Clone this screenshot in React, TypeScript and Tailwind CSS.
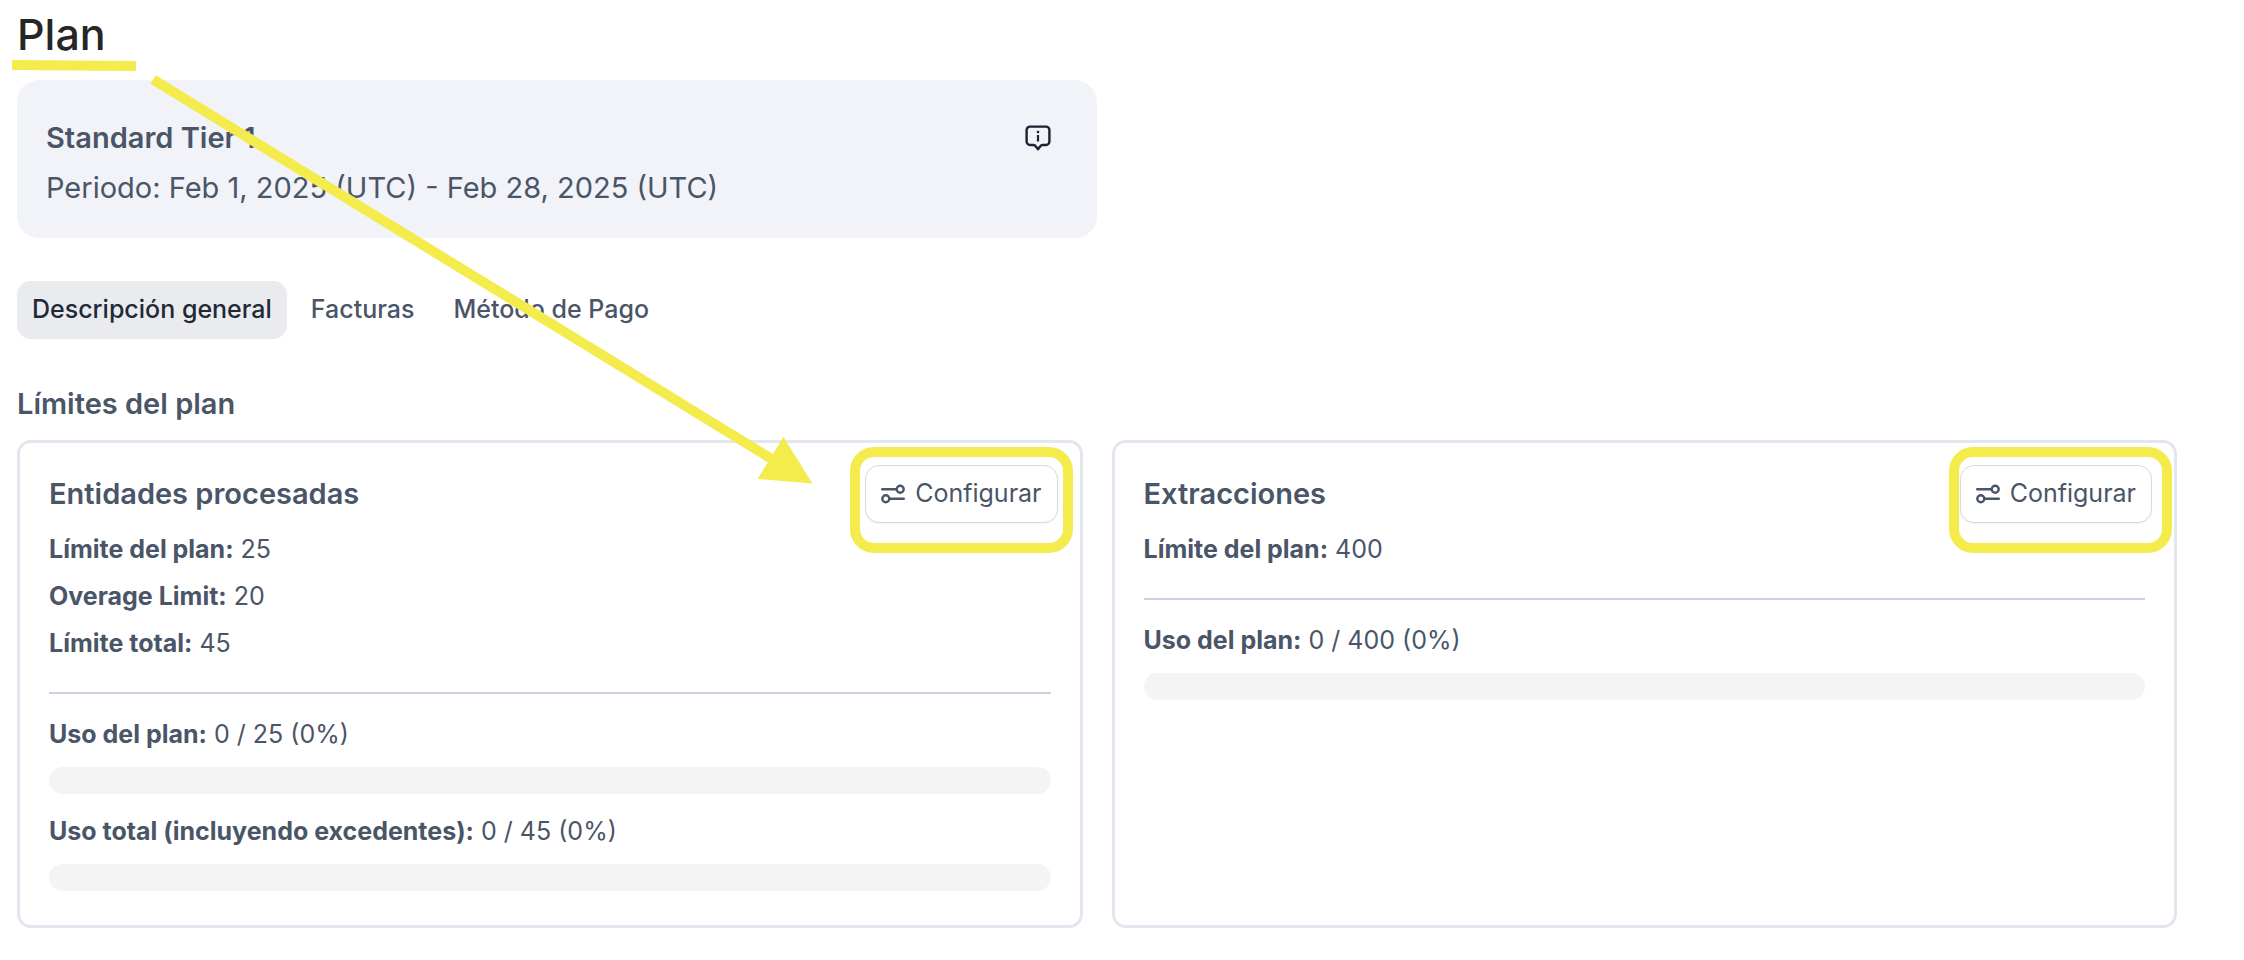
import React, { useState } from 'react';

interface Usage {
  label: string;
  used: number;
  limit: number;
}

interface PlanLimit {
  title: string;
  limits: { label: string; value: number }[];
  usage: Usage[];
  highlight: string;
}

const TABS = ['Descripción general', 'Facturas', 'Método de Pago'];

const PLAN_LIMITS: PlanLimit[] = [
  {
    title: 'Entidades procesadas',
    limits: [
      { label: 'Límite del plan:', value: 25 },
      { label: 'Overage Limit:', value: 20 },
      { label: 'Límite total:', value: 45 },
    ],
    usage: [
      { label: 'Uso del plan:', used: 0, limit: 25 },
      { label: 'Uso total (incluyendo excedentes):', used: 0, limit: 45 },
    ],
    highlight: '-left-[15px] -right-[15px]',
  },
  {
    title: 'Extracciones',
    limits: [{ label: 'Límite del plan:', value: 400 }],
    usage: [{ label: 'Uso del plan:', used: 0, limit: 400 }],
    highlight: '-left-[11px] -right-[20px]',
  },
];

const InfoIcon: React.FC = () => (
  <svg width="26" height="26" viewBox="0 0 26 26" fill="none" stroke="currentColor" strokeLinejoin="round" strokeLinecap="round">
    <path
      strokeWidth="2.4"
      d="M5 1.6h16a3.4 3.4 0 0 1 3.4 3.4v11.6a3.4 3.4 0 0 1-3.4 3.4h-3.6q-1.2 0-1.9 1L13 24.2 10.5 21q-.7-1-1.9-1H5a3.4 3.4 0 0 1-3.4-3.4V5A3.4 3.4 0 0 1 5 1.6Z"
    />
    <path strokeWidth="2.2" strokeLinecap="butt" d="M13 10v6.5" />
    <circle cx="13" cy="7" r="1.3" fill="currentColor" stroke="none" />
  </svg>
);

const SlidersIcon: React.FC = () => (
  <svg width="24" height="20" viewBox="0 0 24 20" fill="none" stroke="currentColor" strokeWidth="2.4" strokeLinecap="round">
    <path d="M1.2 5.2h14M9 14.8h13.8" />
    <circle cx="19.2" cy="5.2" r="3.5" />
    <circle cx="4.8" cy="14.8" r="3.5" />
  </svg>
);

const UsageBar: React.FC<Usage> = ({ label, used, limit }) => {
  const percent = Math.round((used / limit) * 100);

  return (
    <div>
      <p className="mb-[9px] text-[25px] leading-[47px]">
        <strong className="font-bold">{label}</strong> {used} / {limit} ({percent}%)
      </p>
      <div className="h-[27px] overflow-hidden rounded-full bg-[#f4f4f4]">
        <div className="h-full bg-[#4a5568]" style={{ width: `${percent}%` }} />
      </div>
    </div>
  );
};

const LimitCard: React.FC<PlanLimit> = ({ title, limits, usage, highlight }) => (
  <section className="rounded-[14px] border-3 border-[#e2e7ef] px-[29px] pt-[22px] pb-[34px]">
    <div className="-mr-[7px] mb-[3px] flex items-center justify-between">
      <h3 className="text-[29px] font-semibold">{title}</h3>
      <div className="relative">
        <button
          type="button"
          className="flex h-[58px] items-center gap-2.5 rounded-[14px] border border-[#d9d9d9] bg-white px-[15px] text-[25px] shadow-xs"
        >
          <SlidersIcon />
          Configurar
        </button>
        <div className={`pointer-events-none absolute -top-[18px] -bottom-[30px] rounded-3xl border-10 border-[#f4eb4c] ${highlight}`} />
      </div>
    </div>
    {limits.map((item) => (
      <p key={item.label} className="text-[25px] leading-[47px]">
        <strong className="font-bold">{item.label}</strong> {item.value}
      </p>
    ))}
    <hr className="mt-[25px] mb-[17px] border-t-2 border-[#cbd2e1]" />
    <div className="flex flex-col gap-3.5">
      {usage.map((item) => (
        <UsageBar key={item.label} {...item} />
      ))}
    </div>
  </section>
);

const App: React.FC = () => {
  const [activeTab, setActiveTab] = useState(TABS[0]);

  return (
    <main className="relative min-h-screen bg-white pt-2.5 pr-[67px] pb-8 pl-[17px] font-['Inter',sans-serif] text-[#4a5568]">
      <h1 className="mb-[22px] text-[43px] leading-[48px] font-medium text-[#262626]">Plan</h1>

      <div className="flex w-1/2 items-start justify-between rounded-[22px] bg-[#f1f3f8] pt-[33px] pr-[46px] pb-[25px] pl-[29px] text-[29px] leading-[50px]">
        <div>
          <h2 className="font-semibold">Standard Tier 1</h2>
          <p>Periodo: Feb 1, 2025 (UTC) - Feb 28, 2025 (UTC)</p>
        </div>
        <button type="button" aria-label="Información del plan" className="mt-3 text-[#1a2233]">
          <InfoIcon />
        </button>
      </div>

      <nav className="mt-[43px] flex gap-[9px]">
        {TABS.map((tab) => (
          <button
            key={tab}
            type="button"
            onClick={() => setActiveTab(tab)}
            className={`h-[58px] rounded-[14px] px-[15px] text-[25px] font-medium ${
              tab === activeTab ? 'bg-[#eaebef] text-[#1f2937]' : ''
            }`}
          >
            {tab}
          </button>
        ))}
      </nav>

      <h2 className="mt-11 mb-[15px] text-[29px] leading-[42px] font-semibold">Límites del plan</h2>

      <div className="grid grid-cols-2 gap-[29px]">
        {PLAN_LIMITS.map((plan) => (
          <LimitCard key={plan.title} {...plan} />
        ))}
      </div>

      {/* Underline and arrow pointing to the first configure button */}
      <svg className="pointer-events-none absolute top-0 left-0" width="820" height="500" viewBox="0 0 820 500" fill="#f4eb4c">
        <path d="M12 60 136 61V71L12 70Z" />
        <path d="M153 79.5 775 461" stroke="#f4eb4c" strokeWidth="10" />
        <path d="M812.5 483.5 783.5 437 757.5 479Z" />
      </svg>
    </main>
  );
};

export default App;
